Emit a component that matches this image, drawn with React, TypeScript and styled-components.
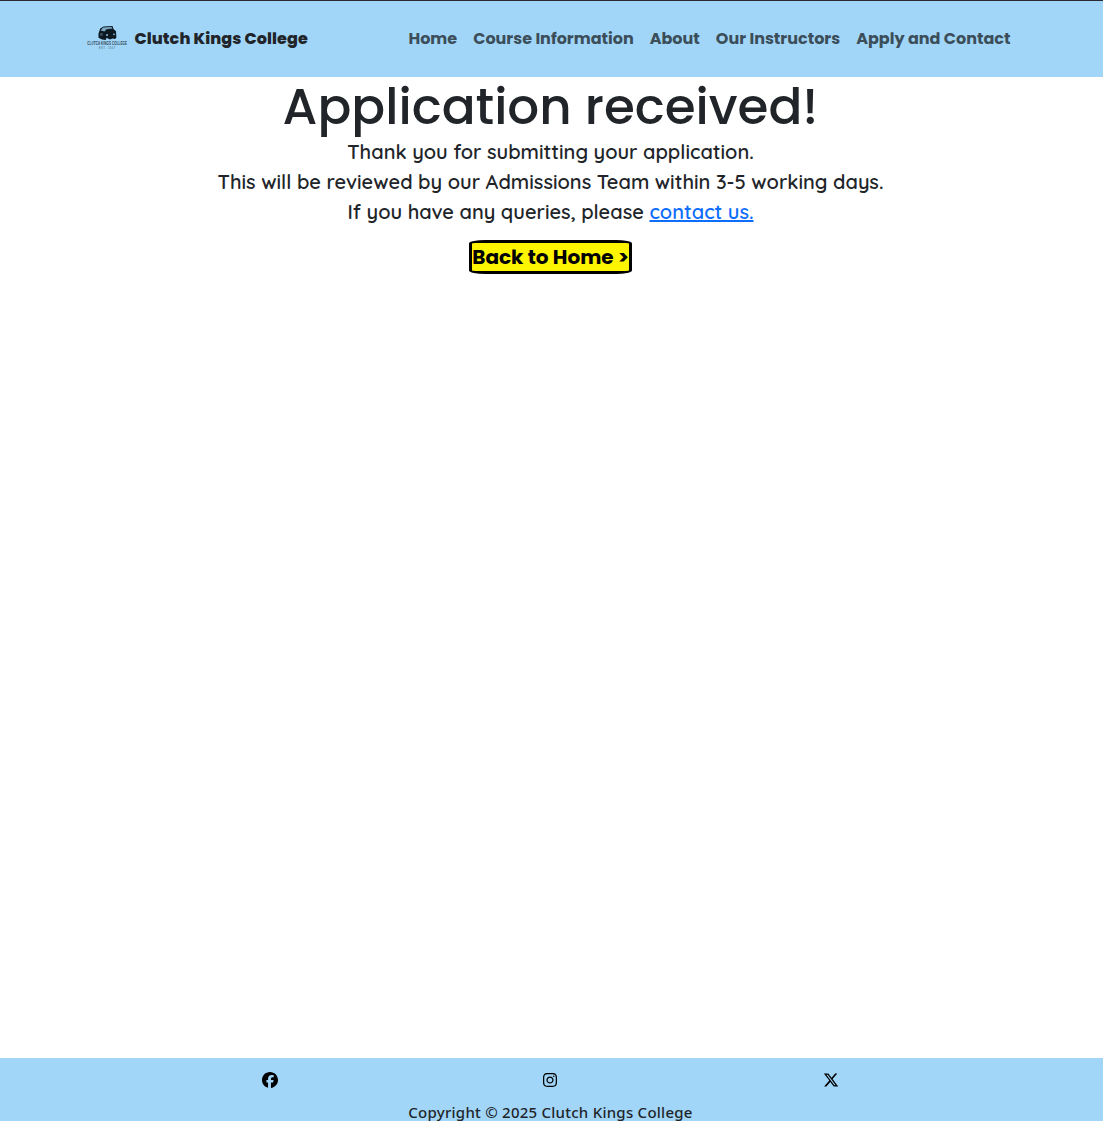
import React from "react";
import styled, { createGlobalStyle } from "styled-components";
import { FaFacebook, FaInstagram, FaXTwitter } from "react-icons/fa6";

const GlobalStyle = createGlobalStyle`
  *, *::before, *::after { box-sizing: border-box; }
  body { margin: 0; background: #fff; color: #212529; }
`;

const Page = styled.div`
  display: flex;
  flex-direction: column;
  height: 1121px;
  overflow: hidden;
  font-family: "Noto Sans", sans-serif;
`;

const Header = styled.header`
  display: flex;
  align-items: center;
  flex: none;
  height: 77px;
  padding: 0 92.5px 2px 87px;
  border-top: 1px solid #2b2a33;
  background: #a1d6f8;
`;

const Brand = styled.a`
  display: flex;
  align-items: center;
  gap: 7.5px;
  color: #212529;
  text-decoration: none;
`;

const Logo = styled.svg`
  display: block;
  width: 40px;
  height: 40px;
`;

const Label = styled.span`
  font-family: Poppins, Inter, sans-serif;
  white-space: nowrap;
`;

const BrandName = styled(Label)`
  font-size: 16px;
  font-weight: 800;
  letter-spacing: 0.08px;
`;

const Nav = styled.nav`
  display: flex;
  gap: 16px;
  margin-left: auto;
`;

const NavLink = styled.a`
  color: #3b4e5a;
  font-size: 16px;
  font-weight: 700;
  line-height: 24px;
  text-decoration: none;
`;

const Main = styled.main`
  display: flex;
  flex: 1;
  flex-direction: column;
  align-items: center;
  padding-right: 2px;
`;

const Title = styled.h1`
  margin: 0;
  font-family: Poppins, Inter, sans-serif;
  font-size: 50px;
  font-weight: 500;
  line-height: 60px;
  white-space: nowrap;
`;

const Line = styled.p`
  margin: 0;
  font-family: Quicksand, Lato, sans-serif;
  font-size: 20px;
  font-weight: 600;
  line-height: 30px;
  white-space: nowrap;
`;

const ContactLink = styled.a`
  color: #0d6efd;
  text-decoration: underline;
`;

const HomeButton = styled.a`
  display: flex;
  align-items: center;
  justify-content: center;
  width: 163px;
  height: 34px;
  margin-top: 13px;
  border: 3px solid #000;
  border-radius: 10%;
  background: #fff500;
  color: #000;
  font-size: 20px;
  font-weight: 700;
  text-decoration: none;
`;

const Footer = styled.footer`
  flex: none;
  height: 63px;
  background: #a1d6f8;
`;

const Socials = styled.div`
  display: flex;
  justify-content: space-around;
  padding: 14px 132px 0 130px;
`;

const Social = styled.a`
  display: flex;
  justify-content: center;
  width: 20px;
  height: 16px;
  color: #000;
  font-size: 16px;
`;

const Copyright = styled.p`
  margin: 12px 2px 0 0;
  font-size: 15px;
  font-weight: 500;
  line-height: 24px;
  letter-spacing: 0.25px;
  text-align: center;
  white-space: nowrap;
`;

const links = ["Home", "Course Information", "About", "Our Instructors", "Apply and Contact"];

export default function App() {
  return (
    <Page>
      <GlobalStyle />
      <Header>
        <Brand>
          <Logo viewBox="0 0 40 40">
            <path d="M11.5 15.5 13.2 10.5 16.5 8.5 25.5 8 26.5 11 29 13.2 29.4 19.6 28 21 25.5 20.4 23 21.5 19.5 19.8 18.8 22 15 21.6 11.5 19.8Z" fill="#0d1a22" />
            <path d="M13.6 12.5 16 9.4 24.6 8.9 25.4 10.6 19.5 11.2 17.5 13.4Z" fill="#7da9c5" />
            <path d="M13 15.6 15.4 14.8 15.8 17.4 13.5 18Z" fill="#3d5666" />
            <circle cx="20" cy="17" r="1" fill="#8dbdda" />
            <circle cx="27" cy="16.3" r="0.9" fill="#8dbdda" />
            <g transform="scale(0.65 1)" fill="#2d4350" fontFamily="Liberation Sans, sans-serif">
              <text x="0.5" y="27.2" textLength="61" lengthAdjust="spacing" fontWeight="700" fontSize="4.6">CLUTCH KINGS COLLEGE</text>
              <text x="18.5" y="31.2" textLength="25" lengthAdjust="spacing" fontSize="3.2">EST. 2007</text>
            </g>
          </Logo>
          <BrandName>Clutch Kings College</BrandName>
        </Brand>
        <Nav>
          {links.map((text) => (
            <NavLink key={text}>
              <Label>{text}</Label>
            </NavLink>
          ))}
        </Nav>
      </Header>
      <Main>
        <Title>Application received!</Title>
        <Line>Thank you for submitting your application.</Line>
        <Line>This will be reviewed by our Admissions Team within 3-5 working days.</Line>
        <Line>
          If you have any queries, please <ContactLink>contact us.</ContactLink>
        </Line>
        <HomeButton>
          <Label>Back to Home &gt;</Label>
        </HomeButton>
      </Main>
      <Footer>
        <Socials>
          <Social><FaFacebook /></Social>
          <Social><FaInstagram /></Social>
          <Social><FaXTwitter /></Social>
        </Socials>
        <Copyright>Copyright © 2025 Clutch Kings College</Copyright>
      </Footer>
    </Page>
  );
}
